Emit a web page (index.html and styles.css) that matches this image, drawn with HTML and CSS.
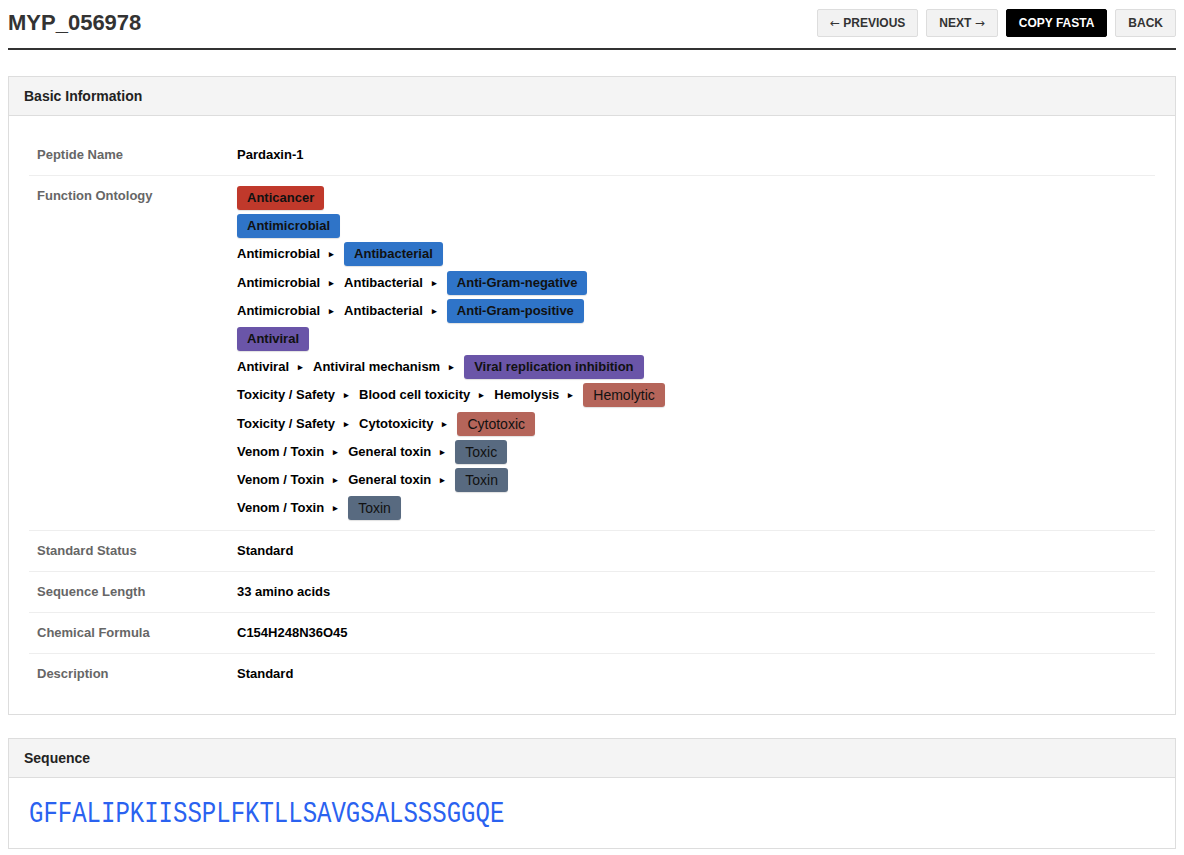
FILE: index.html
```html
<!DOCTYPE html>
<html lang="en">
<head>
    <meta charset="UTF-8">
    <title>MYP_056978</title>
    <link rel="stylesheet" href="styles.css">
</head>
<body>
<div class="topbar">
    <h1>MYP_056978</h1>
    <div class="actions">
        <button class="btn"><span class="arr">&larr;</span> PREVIOUS</button>
        <button class="btn">NEXT <span class="arr">&rarr;</span></button>
        <button class="btn dark">COPY FASTA</button>
        <button class="btn">BACK</button>
    </div>
</div>

<div class="card">
    <div class="card-head">Basic Information</div>
    <div class="card-body">
        <table class="info">
            <tr>
                <td class="label">Peptide Name</td>
                <td class="value">Pardaxin-1</td>
            </tr>
            <tr>
                <td class="label top">Function Ontology</td>
                <td class="value onto">
                    <div class="path"><span class="tag red">Anticancer</span></div>
                    <div class="path"><span class="tag blue">Antimicrobial</span></div>
                    <div class="path">Antimicrobial <i>&#9656;</i> <span class="tag blue">Antibacterial</span></div>
                    <div class="path">Antimicrobial <i>&#9656;</i> Antibacterial <i>&#9656;</i> <span class="tag blue">Anti-Gram-negative</span></div>
                    <div class="path">Antimicrobial <i>&#9656;</i> Antibacterial <i>&#9656;</i> <span class="tag blue">Anti-Gram-positive</span></div>
                    <div class="path"><span class="tag purple">Antiviral</span></div>
                    <div class="path">Antiviral <i>&#9656;</i> Antiviral mechanism <i>&#9656;</i> <span class="tag purple">Viral replication inhibition</span></div>
                    <div class="path">Toxicity / Safety <i>&#9656;</i> Blood cell toxicity <i>&#9656;</i> Hemolysis <i>&#9656;</i> <span class="tag rust light">Hemolytic</span></div>
                    <div class="path">Toxicity / Safety <i>&#9656;</i> Cytotoxicity <i>&#9656;</i> <span class="tag rust light">Cytotoxic</span></div>
                    <div class="path">Venom / Toxin <i>&#9656;</i> General toxin <i>&#9656;</i> <span class="tag slate light">Toxic</span></div>
                    <div class="path">Venom / Toxin <i>&#9656;</i> General toxin <i>&#9656;</i> <span class="tag slate light">Toxin</span></div>
                    <div class="path">Venom / Toxin <i>&#9656;</i> <span class="tag slate light">Toxin</span></div>
                </td>
            </tr>
            <tr>
                <td class="label">Standard Status</td>
                <td class="value">Standard</td>
            </tr>
            <tr>
                <td class="label">Sequence Length</td>
                <td class="value">33 amino acids</td>
            </tr>
            <tr>
                <td class="label">Chemical Formula</td>
                <td class="value">C154H248N36O45</td>
            </tr>
            <tr>
                <td class="label">Description</td>
                <td class="value">Standard</td>
            </tr>
        </table>
    </div>
</div>

<div class="card">
    <div class="card-head">Sequence</div>
    <div class="card-body seq-body">
        <span class="sequence">GFFALIPKIISSPLFKTLLSAVGSALSSSGGQE</span>
    </div>
</div>
</body>
</html>
```

FILE: styles.css
```css
body {
    margin: 8px;
    font-family: "Liberation Sans", Arial, sans-serif;
    color: #000;
    background: #fff;
}

.topbar {
    display: flex;
    align-items: center;
    justify-content: space-between;
    height: 46px;
    padding-bottom: 2px;
    border-bottom: 2px solid #333;
    margin-top: -8px;
}

h1 {
    margin: 0;
    font-size: 22px;
    font-weight: bold;
    color: #333;
}

.actions {
    display: flex;
    gap: 8px;
    margin-top: -1px;
}

.btn {
    height: 28px;
    padding: 0 12px;
    border: 1px solid #ddd;
    border-radius: 2px;
    background: #f2f2f2;
    color: #333;
    font-family: "Liberation Sans", Arial, sans-serif;
    font-size: 12px;
    font-weight: bold;
}
.btn .arr {
    font-family: "DejaVu Sans", sans-serif;
    font-weight: normal;
    font-size: 12px;
}
.btn.dark {
    background: #000;
    border-color: #000;
    color: #fff;
}

.card {
    border: 1px solid #ddd;
    margin-top: 26px;
}
.card + .card {
    margin-top: 23px;
}

.card-head {
    height: 38px;
    line-height: 38px;
    padding-left: 15px;
    background: #f4f4f4;
    border-bottom: 1px solid #ddd;
    font-size: 14px;
    font-weight: bold;
    color: #222;
}

.card-body {
    padding: 19px 20px 20px 20px;
}

table.info {
    width: 100%;
    border-collapse: collapse;
    font-size: 13px;
}

table.info td {
    padding: 12px 8px;
    line-height: 16px;
    border-bottom: 1px solid #eee;
    vertical-align: middle;
}
table.info tr:last-child td {
    border-bottom: none;
}

td.label {
    width: 184px;
    color: #666;
    font-weight: bold;
}
td.label.top {
    vertical-align: top;
    padding-top: 12px;
}
td.value {
    font-weight: bold;
}

table.info td.onto {
    padding-top: 10px;
    padding-bottom: 10px;
}

.path {
    display: flex;
    align-items: center;
    gap: 8px;
    height: 24px;
    margin-bottom: 4.2px;
    white-space: nowrap;
}
.path:last-child {
    margin-bottom: 0;
}
.path i {
    font-style: normal;
    font-size: 9px;
    width: 6px;
    margin: 0 1px;
}

.tag {
    display: inline-block;
    height: 24px;
    line-height: 24px;
    padding: 0 10px;
    border-radius: 3px;
    color: #111;
    font-size: 13px;
    font-weight: bold;
    box-shadow: 0 1px 1px rgba(0, 0, 0, 0.12);
}
.tag.light {
    font-size: 14px;
    font-weight: normal;
}
.red { background: #c0392b; }
.blue { background: #2f74c8; }
.purple { background: #6a55a8; }
.rust { background: #b5655a; }
.slate { background: #586a80; }

.seq-body {
    height: 30px;
    padding: 20px;
    display: flex;
    align-items: center;
}

.sequence {
    display: inline-block;
    font-family: "Liberation Mono", "Courier New", monospace;
    font-size: 24px;
    color: #2a62f0;
    transform: scaleY(1.25);
    transform-origin: left center;
}
```
